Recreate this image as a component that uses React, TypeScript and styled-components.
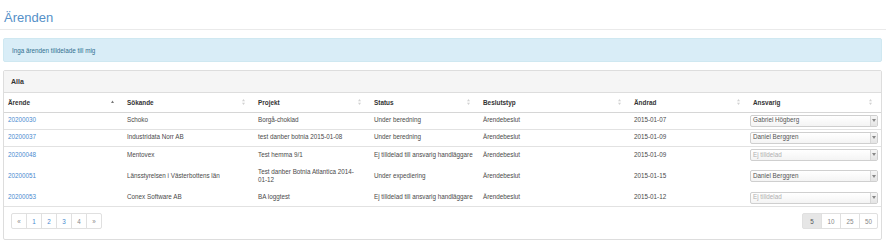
import React from "react";
import styled, { createGlobalStyle } from "styled-components";

const GlobalStyle = createGlobalStyle`
  html, body { margin: 0; padding: 0; background: #fff; }
  body {
    font-family: "Liberation Sans", Arial, Helvetica, sans-serif;
    color: #444;
    font-size: 6.3px;
    -webkit-font-smoothing: antialiased;
  }
  * { box-sizing: border-box; }
`;

const Page = styled.div`
  width: 886px;
  height: 241px;
  overflow: hidden;
`;

const PageHeader = styled.div`
  padding: 11px 0 5px 4px;
  border-bottom: 1px solid #eaeaea;
`;

const Title = styled.h1`
  margin: 0;
  font-size: 13px;
  line-height: 13px;
  font-weight: normal;
  color: #5590c8;
`;

const Content = styled.div`
  padding: 0 4px 0 3px;
`;

const Alert = styled.div`
  margin-top: 8px;
  height: 24px;
  display: flex;
  align-items: center;
  padding-left: 8px;
  background: #d9edf7;
  border: 1px solid #cfe8f1;
  border-radius: 2px;
  color: #31708f;
  font-size: 6.3px;
`;

const Panel = styled.div`
  margin-top: 8px;
  border: 1px solid #dddddd;
  border-radius: 2px;
  background: #fff;
`;

const PanelHeading = styled.div`
  height: 22px;
  display: flex;
  align-items: center;
  padding-left: 7px;
  background: #f5f5f5;
  border-bottom: 1px solid #dddddd;
  font-weight: bold;
  font-size: 7px;
  color: #333;
`;

const Table = styled.table`
  width: 100%;
  border-collapse: collapse;
  table-layout: fixed;
`;

const HeadCell = styled.th`
  height: 19px;
  padding: 0 3px 0 4px;
  text-align: left;
  font-weight: bold;
  font-size: 6.4px;
  color: #333;
  border-bottom: 1px solid #d6d6d6;
  vertical-align: middle;
`;

const HeadInner = styled.div`
  display: flex;
  align-items: center;
  justify-content: space-between;
  padding-right: 6px;
`;

const Row = styled.tr<{ $tall?: boolean }>`
  height: ${(p) => (p.$tall ? "26px" : "17px")};
  & + & td { border-top: 1px solid #e2e2e2; }
`;

const Cell = styled.td<{ $tight?: boolean }>`
  padding: ${(p) => (p.$tight ? "0 3px 0 1px" : "0 3px 0 4px")};
  vertical-align: middle;
  font-size: 6.3px;
  line-height: 8.4px;
  color: #4a4a4a;
`;

const NoWrap = styled.span`
  white-space: nowrap;
`;

const CaseLink = styled.a`
  color: #4a8bd0;
  text-decoration: none;
`;

const SelectBox = styled.div<{ $empty?: boolean }>`
  display: flex;
  align-items: stretch;
  height: 12px;
  border: 1px solid #cfcfcf;
  border-radius: 2px;
  background: linear-gradient(#ffffff, #f4f4f4);
  color: ${(p) => (p.$empty ? "#b0b0b0" : "#555")};
  font-size: 6.3px;
  overflow: hidden;
`;

const SelectText = styled.span`
  flex: 1;
  display: flex;
  align-items: center;
  padding-left: 2px;
  white-space: nowrap;
`;

const SelectCaret = styled.span`
  width: 7px;
  display: flex;
  align-items: center;
  justify-content: center;
  border-left: 1px solid #d6d6d6;
  background: linear-gradient(#f6f6f6, #e4e4e4);
`;

const Footer = styled.div`
  display: flex;
  justify-content: space-between;
  align-items: flex-start;
  height: 33px;
  padding: 6px 3px 0 7px;
  border-top: 1px solid #e2e2e2;
`;

const Pager = styled.ul`
  display: flex;
  margin: 0;
  padding: 0;
  list-style: none;
`;

const PageItem = styled.li<{ $w: number; $active?: boolean; $muted?: boolean }>`
  width: ${(p) => p.$w}px;
  height: 16px;
  display: flex;
  align-items: center;
  justify-content: center;
  border: 1px solid #e0e0e0;
  margin-left: -1px;
  font-size: 6.3px;
  color: ${(p) => (p.$muted ? "#888" : p.$active ? "#555" : "#4a8bd0")};
  background: ${(p) => (p.$active ? "#e6e6e6" : "#fff")};
  &:first-child { margin-left: 0; border-radius: 2px 0 0 2px; }
  &:last-child { border-radius: 0 2px 2px 0; }
`;

const SortIcon = ({ sorted }: { sorted?: boolean }) =>
  sorted ? (
    <svg width="3" height="4" viewBox="0 0 3 4">
      <path d="M1.5 0.5 L3 3 L0 3 Z" fill="#777" />
    </svg>
  ) : (
    <svg width="3" height="6" viewBox="0 0 3 6">
      <path d="M1.5 0 L3 2.3 L0 2.3 Z" fill="#d2d2d2" />
      <path d="M1.5 6 L3 3.7 L0 3.7 Z" fill="#d2d2d2" />
    </svg>
  );

const Caret = () => (
  <svg width="4" height="3" viewBox="0 0 4 3">
    <path d="M0 0 L4 0 L2 3 Z" fill="#888" />
  </svg>
);

type Item = {
  id: string;
  applicant: string;
  project: React.ReactNode;
  status: string;
  decision: string;
  changed: string;
  owner: string | null;
  tall?: boolean;
};

const rows: Item[] = [
  { id: "20200030", applicant: "Schoko", project: "Borgå-choklad", status: "Under beredning", decision: "Ärendebeslut", changed: "2015-01-07", owner: "Gabriel Högberg" },
  { id: "20200037", applicant: "Industridata Norr AB", project: "test danber botnia 2015-01-08", status: "Under beredning", decision: "Ärendebeslut", changed: "2015-01-09", owner: "Daniel Berggren" },
  { id: "20200048", applicant: "Mentovex", project: "Test hemma 9/1", status: "Ej tilldelad till ansvarig handläggare", decision: "Ärendebeslut", changed: "2015-01-09", owner: null },
  {
    id: "20200051",
    applicant: "Länsstyrelsen i Västerbottens län",
    project: (
      <>
        Test danber Botnia Atlantica 2014-<wbr />
        <NoWrap>01-12</NoWrap>
      </>
    ),
    status: "Under expediering",
    decision: "Ärendebeslut",
    changed: "2015-01-15",
    owner: "Daniel Berggren",
    tall: true,
  },
  { id: "20200053", applicant: "Conex Software AB", project: "BA loggtest", status: "Ej tilldelad till ansvarig handläggare", decision: "Ärendebeslut", changed: "2015-01-12", owner: null },
];

const columns = [
  { label: "Ärende", width: 119, sorted: true },
  { label: "Sökande", width: 131 },
  { label: "Projekt", width: 116 },
  { label: "Status", width: 109 },
  { label: "Beslutstyp", width: 151 },
  { label: "Ändrad", width: 119 },
  { label: "Ansvarig", width: 132 },
];

export default function App() {
  return (
    <Page>
      <GlobalStyle />
      <PageHeader>
        <Title>Ärenden</Title>
      </PageHeader>
      <Content>
        <Alert>Inga ärenden tilldelade till mig</Alert>
        <Panel>
          <PanelHeading>Alla</PanelHeading>
          <Table>
            <colgroup>
              {columns.map((c) => (
                <col key={c.label} style={{ width: c.width }} />
              ))}
            </colgroup>
            <thead>
              <tr>
                {columns.map((c) => (
                  <HeadCell key={c.label}>
                    <HeadInner>
                      <span>{c.label}</span>
                      <SortIcon sorted={c.sorted} />
                    </HeadInner>
                  </HeadCell>
                ))}
              </tr>
            </thead>
            <tbody>
              {rows.map((r) => (
                <Row key={r.id} $tall={r.tall}>
                  <Cell>
                    <CaseLink href="#">{r.id}</CaseLink>
                  </Cell>
                  <Cell>{r.applicant}</Cell>
                  <Cell>{r.project}</Cell>
                  <Cell>{r.status}</Cell>
                  <Cell>{r.decision}</Cell>
                  <Cell>{r.changed}</Cell>
                  <Cell $tight>
                    <SelectBox $empty={!r.owner}>
                      <SelectText>{r.owner ?? "Ej tilldelad"}</SelectText>
                      <SelectCaret>
                        <Caret />
                      </SelectCaret>
                    </SelectBox>
                  </Cell>
                </Row>
              ))}
            </tbody>
          </Table>
          <Footer>
            <Pager>
              <PageItem $w={16} $muted>«</PageItem>
              <PageItem $w={16}>1</PageItem>
              <PageItem $w={16}>2</PageItem>
              <PageItem $w={16}>3</PageItem>
              <PageItem $w={16} $muted>4</PageItem>
              <PageItem $w={16} $muted>»</PageItem>
            </Pager>
            <Pager>
              <PageItem $w={20} $active>5</PageItem>
              <PageItem $w={20} $muted>10</PageItem>
              <PageItem $w={20} $muted>25</PageItem>
              <PageItem $w={19} $muted>50</PageItem>
            </Pager>
          </Footer>
        </Panel>
      </Content>
    </Page>
  );
}
